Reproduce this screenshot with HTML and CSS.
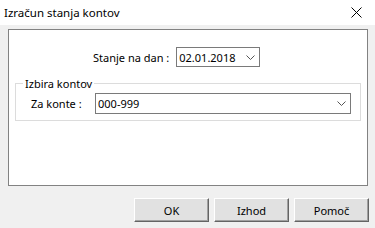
FILE: index.html
```html
<!DOCTYPE html>
<html lang="sl">
<head>
  <meta charset="UTF-8">
  <title>Izračun stanja kontov</title>
  <link rel="stylesheet" href="styles.css">
</head>
<body>
  <div class="dialog">
    <div class="titlebar">
      <span class="title">Izračun stanja kontov</span>
      <svg class="close" width="11" height="11" viewBox="0 0 11 11">
        <path d="M0.5 0.5 L10.5 10.5 M10.5 0.5 L0.5 10.5" stroke="#000" stroke-width="1" fill="none"/>
      </svg>
    </div>

    <div class="content">
      <div class="panel">
        <div class="date-row">
          <span class="label">Stanje na dan :</span>
          <div class="combo combo-date">
            <span>02.01.2018</span>
            <svg class="chevron" width="9" height="5" viewBox="0 0 9 5">
              <path d="M0.5 0.5 L4.5 4.5 L8.5 0.5" stroke="#555" stroke-width="1" fill="none"/>
            </svg>
          </div>
        </div>

        <fieldset class="group">
          <legend>Izbira kontov</legend>
          <div class="konto-row">
            <span class="label">Za konte :</span>
            <div class="combo combo-konto">
              <span>000-999</span>
              <svg class="chevron" width="9" height="5" viewBox="0 0 9 5">
                <path d="M0.5 0.5 L4.5 4.5 L8.5 0.5" stroke="#555" stroke-width="1" fill="none"/>
              </svg>
            </div>
          </div>
        </fieldset>
      </div>

      <div class="buttons">
        <button class="btn">OK</button>
        <button class="btn">Izhod</button>
        <button class="btn">Pomoč</button>
      </div>
    </div>
  </div>
</body>
</html>
```

FILE: styles.css
```css
body {
  margin: 0;
  font-family: "Noto Sans", "Open Sans", sans-serif;
  font-size: 11px;
  color: #000;
  background: #f0f0f0;
}

.dialog {
  width: 375px;
  height: 228px;
  overflow: hidden;
}

.titlebar {
  height: 25px;
  background: #fff;
  display: flex;
  align-items: center;
  justify-content: space-between;
  padding: 0 13px 0 4px;
}

.title {
  font-size: 11.5px;
}

.close {
  display: block;
}

.content {
  padding: 4px 7px 0 8px;
}

/* white frame */
.panel {
  height: 155px;
  background: #fff;
  border: 1px solid #828282;
}

.label {
  white-space: nowrap;
}

.date-row {
  display: flex;
  align-items: center;
  padding: 17px 0 0 84px;
}

.date-row .label {
  margin-right: 7px;
}

.combo {
  display: flex;
  align-items: center;
  justify-content: space-between;
  box-sizing: border-box;
  background: #fff;
  border: 1px solid #7a7a7a;
  padding: 0 4px 0 2px;
}

.combo-date {
  width: 84px;
  height: 20px;
}

.combo-konto {
  width: 256px;
  height: 21px;
}

.chevron {
  display: block;
}

/* group box */
.group {
  margin: 9px 6px 0 6px;
  padding: 0 0 6px 0;
  border: 1px solid #dcdcdc;
}

.group legend {
  margin-left: 7px;
  padding: 0 2px;
}

.konto-row {
  display: flex;
  align-items: center;
  padding: 2px 0 0 15px;
}

.konto-row .label {
  width: 64px;
}

/* buttons */
.buttons {
  display: flex;
  justify-content: flex-end;
  gap: 5px;
  margin: 12px -1px 0 0;
}

.btn {
  width: 75px;
  height: 24px;
  font-family: inherit;
  font-size: 11px;
  background: #e1e1e1;
  border: 1px solid;
  border-color: #fff #646464 #646464 #fff;
  box-shadow: inset -1px -1px 0 #a0a0a0;
  padding: 0;
}
```
